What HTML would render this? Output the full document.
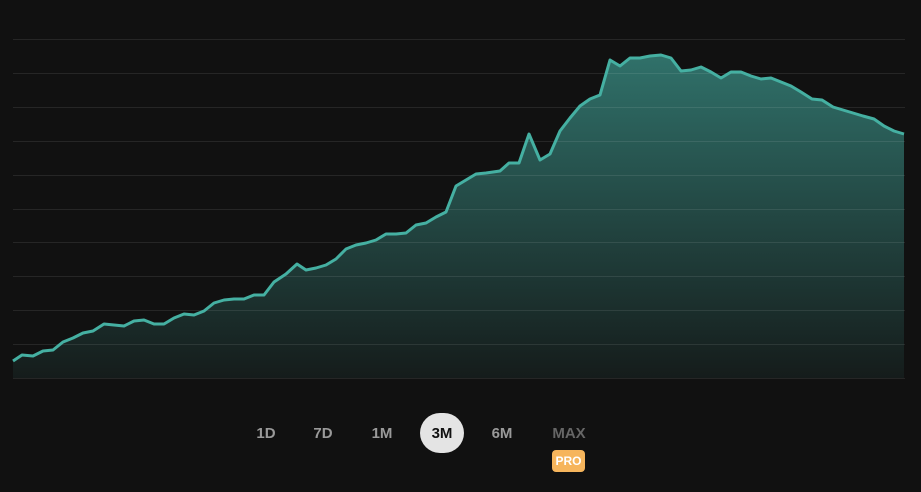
<!DOCTYPE html>
<html><head><meta charset="utf-8"><style>
html,body{margin:0;padding:0;background:#111111;width:921px;height:492px;overflow:hidden;font-family:"Liberation Sans",sans-serif}
.btns{position:absolute;top:413px;left:0;width:921px;height:40px}
.b{position:absolute;top:0;height:40px;line-height:42px;font-size:15px;font-weight:bold;color:#9a9a9a;text-align:center;width:44px}
.sel{background:#e4e4e4;color:#111;border-radius:22px;width:44px;height:40px}
.pro{position:absolute;left:552px;top:450px;width:33px;height:22px;background:#f6b55c;border-radius:4px;color:#fff;font-size:12px;font-weight:bold;line-height:22px;text-align:center}
</style></head><body>
<svg width="921" height="400" style="position:absolute;left:0;top:0">
<defs>
<linearGradient id="g2" x1="0" y1="55" x2="0" y2="378" gradientUnits="userSpaceOnUse"><stop offset="0" stop-color="#30716a"/><stop offset="1" stop-color="#151c1b"/></linearGradient></defs>
<polygon fill="url(#g2)" points="13,378 13,361 22,355 33,356 43,351 53,350 63,342 73,338 83,333 93,331 104,324 114,325 124,326 134,321 144,320 154,324 164,324 174,318 184,314 194,315 204,311 214,303 224,300 234,299 244,299 254,295 264,295 274,282 286,274 297,264 306,270 316,268 326,265 336,259 346,249 356,245 366,243 376,240 386,234 396,234 406,233 416,225 426,223 436,217 446,212 456,186 466,180 476,174 486,173 500,171 509,163 519,163 529,134 540,160 550,154 560,131 570,118 580,106 590,99 600,95 610,60 620,66 630,58 640,58 650,56 661,55 671,58 681,71 691,70 701,67 711,72 721,78 731,72 741,72 751,76 761,79 771,78 781,82 791,86 801,92 812,99 822,100 833,107 843,110 853,113 863,116 874,119 884,126 894,131 904,134 904,378"/>
<g stroke="#ffffff" stroke-opacity="0.09" stroke-width="1">
<line x1="13" x2="905" y1="39.5" y2="39.5"/><line x1="13" x2="905" y1="73.5" y2="73.5"/><line x1="13" x2="905" y1="107.5" y2="107.5"/><line x1="13" x2="905" y1="141.5" y2="141.5"/><line x1="13" x2="905" y1="175.5" y2="175.5"/><line x1="13" x2="905" y1="209.5" y2="209.5"/><line x1="13" x2="905" y1="242.5" y2="242.5"/><line x1="13" x2="905" y1="276.5" y2="276.5"/><line x1="13" x2="905" y1="310.5" y2="310.5"/><line x1="13" x2="905" y1="344.5" y2="344.5"/><line x1="13" x2="905" y1="378.5" y2="378.5"/>
</g>
<polyline fill="none" stroke="#45b0a2" stroke-width="3" stroke-linejoin="round" points="13,361 22,355 33,356 43,351 53,350 63,342 73,338 83,333 93,331 104,324 114,325 124,326 134,321 144,320 154,324 164,324 174,318 184,314 194,315 204,311 214,303 224,300 234,299 244,299 254,295 264,295 274,282 286,274 297,264 306,270 316,268 326,265 336,259 346,249 356,245 366,243 376,240 386,234 396,234 406,233 416,225 426,223 436,217 446,212 456,186 466,180 476,174 486,173 500,171 509,163 519,163 529,134 540,160 550,154 560,131 570,118 580,106 590,99 600,95 610,60 620,66 630,58 640,58 650,56 661,55 671,58 681,71 691,70 701,67 711,72 721,78 731,72 741,72 751,76 761,79 771,78 781,82 791,86 801,92 812,99 822,100 833,107 843,110 853,113 863,116 874,119 884,126 894,131 904,134"/>
</svg>
<div class="btns">
<div class="b" style="left:244px">1D</div>
<div class="b" style="left:301px">7D</div>
<div class="b" style="left:360px">1M</div>
<div class="b sel" style="left:420px">3M</div>
<div class="b" style="left:480px">6M</div>
<div class="b" style="left:547px;color:#666">MAX</div>
</div>
<div class="pro">PRO</div>
</body></html>
